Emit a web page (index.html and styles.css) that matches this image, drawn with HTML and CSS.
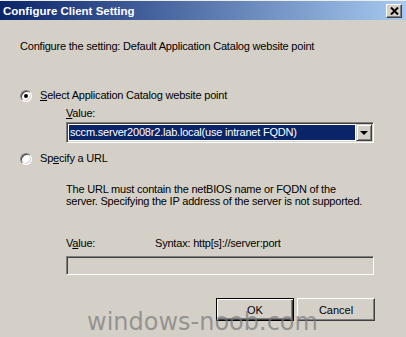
FILE: index.html
```html
<!DOCTYPE html>
<html>
<head>
    <title>Configure Client Setting</title>
    <link rel="stylesheet" href="styles.css">
</head>
<body>

<div class="window">
    <div class="titlebar">
        <span class="title">Configure Client Setting</span>
        <span class="close-btn">
            <svg width="9" height="8" viewBox="0 0 9 8"><path d="M1 0.5L8 7.5M8 0.5L1 7.5" stroke="#000" stroke-width="2" fill="none"/></svg>
        </span>
    </div>

    <div class="content">
        <p class="intro">Configure the setting: Default Application Catalog website point</p>

        <div class="option">
            <span class="radio checked"></span>
            <span><u>S</u>elect Application Catalog website point</span>
        </div>
        <div class="indent">
            <div class="label"><u>V</u>alue:</div>
            <div class="combo">
                <div class="combo-field"><span class="selected">sccm.server2008r2.lab.local(use intranet FQDN)</span></div>
                <div class="combo-arrow"><span class="tri"></span></div>
            </div>
        </div>

        <div class="option second">
            <span class="radio"></span>
            <span>Sp<u>e</u>cify a URL</span>
        </div>
        <div class="indent">
            <p class="note">The URL must contain the netBIOS name or FQDN of the<br>server. Specifying the IP address of the server is not supported.</p>
            <div class="value-row">
                <span class="value-label">V<u>a</u>lue:</span>
                <span>Syntax: http[s]://server:port</span>
            </div>
            <div class="textbox"></div>
        </div>

        <div class="buttons">
            <button class="btn default">OK</button>
            <button class="btn">Cancel</button>
        </div>
    </div>

    <div class="watermark">windows-noob.com</div>
</div>

</body>
</html>
```

FILE: styles.css
```css
body {
    margin: 0;
    padding: 0;
    background-color: #d4d0c8;
    font-family: 'Liberation Sans', Arial, sans-serif;
    font-size: 11px;
    color: #000;
}

.window {
    position: relative;
    width: 406px;
    height: 337px;
    overflow: hidden;
    background-color: #d4d0c8;
    border-top: 1px solid #eeede9;
    box-sizing: border-box;
}

.titlebar {
    height: 19px;
    background: linear-gradient(to right, #0a246a, #a6caf0);
    display: flex;
    align-items: center;
    justify-content: space-between;
    padding: 0 4px 0 3px;
}

.title {
    color: #fff;
    font-weight: bold;
    font-size: 11.5px;
}

.close-btn {
    width: 16px;
    height: 14px;
    box-sizing: border-box;
    background-color: #d4d0c8;
    border: 1px solid;
    border-color: #fff #404040 #404040 #fff;
    box-shadow: inset -1px -1px #808080;
    display: flex;
    align-items: center;
    justify-content: center;
}

.close-btn svg {
    display: block;
}

.content {
    padding-left: 20px;
}

p {
    margin: 0;
}

.intro {
    margin-top: 20px;
    line-height: 13px;
    letter-spacing: -0.2px;
}

.option {
    display: flex;
    align-items: center;
    gap: 8px;
    margin-top: 36px;
    line-height: 13px;
    letter-spacing: -0.2px;
}

.option.second {
    margin-top: 9px;
}

.radio {
    width: 12px;
    height: 12px;
    box-sizing: border-box;
    border-radius: 50%;
    border: 1px solid;
    border-color: #808080 #fff #fff #808080;
    background-color: #fff;
    box-shadow: inset 1px 1px #404040, inset -1px -1px #d4d0c8;
    position: relative;
}

.radio.checked::after {
    content: "";
    position: absolute;
    left: 3px;
    top: 3px;
    width: 4px;
    height: 4px;
    border-radius: 50%;
    background-color: #000;
}

.indent {
    margin-left: 46px;
    letter-spacing: -0.2px;
}

.label {
    margin-top: 5px;
    line-height: 13px;
}

.combo {
    margin-top: 2px;
    width: 308px;
    height: 21px;
    box-sizing: border-box;
    border: 1px solid;
    border-color: #808080 #fff #fff #808080;
    box-shadow: inset 1px 1px #404040, inset -1px -1px #d4d0c8;
    padding: 1px;
    display: flex;
    background-color: #fff;
}

.combo-field {
    flex: 1;
    padding: 1px;
    display: flex;
}

.selected {
    flex: 1;
    background-color: #0a246a;
    color: #fff;
    line-height: 15px;
    padding-left: 1px;
}

.combo-arrow {
    width: 16px;
    box-sizing: border-box;
    background-color: #d4d0c8;
    border: 1px solid;
    border-color: #d4d0c8 #404040 #404040 #d4d0c8;
    box-shadow: inset 1px 1px #fff, inset -1px -1px #808080;
    display: flex;
    align-items: center;
    justify-content: center;
}

.tri {
    width: 0;
    height: 0;
    border-left: 4px solid transparent;
    border-right: 4px solid transparent;
    border-top: 4px solid #000;
}

.note {
    margin-top: 18px;
    line-height: 12px;
}

.value-row {
    margin-top: 30px;
    line-height: 13px;
    display: flex;
}

.value-label {
    width: 89px;
}

.textbox {
    margin-top: 6px;
    width: 308px;
    height: 19px;
    box-sizing: border-box;
    border: 1px solid;
    border-color: #808080 #fff #fff #808080;
    box-shadow: inset 1px 1px #404040, inset -1px -1px #d4d0c8;
}

.buttons {
    margin-top: 23px;
    padding-left: 196px;
    display: flex;
    gap: 3px;
}

.btn {
    width: 78px;
    height: 23px;
    box-sizing: border-box;
    font-family: 'Liberation Sans', Arial, sans-serif;
    font-size: 11px;
    color: #000;
    background-color: #d4d0c8;
    border: 1px solid;
    border-color: #fff #404040 #404040 #fff;
    box-shadow: inset -1px -1px #808080;
    padding: 0;
}

.btn.default {
    border-color: #000;
    box-shadow: inset 1px 1px #fff, inset -1px -1px #404040, inset -2px -2px #808080;
}

.watermark {
    position: absolute;
    left: 87px;
    top: 307px;
    font-family: 'DejaVu Sans', sans-serif;
    font-size: 24px;
    line-height: 28px;
    color: rgba(120, 120, 120, 0.7);
}
```
